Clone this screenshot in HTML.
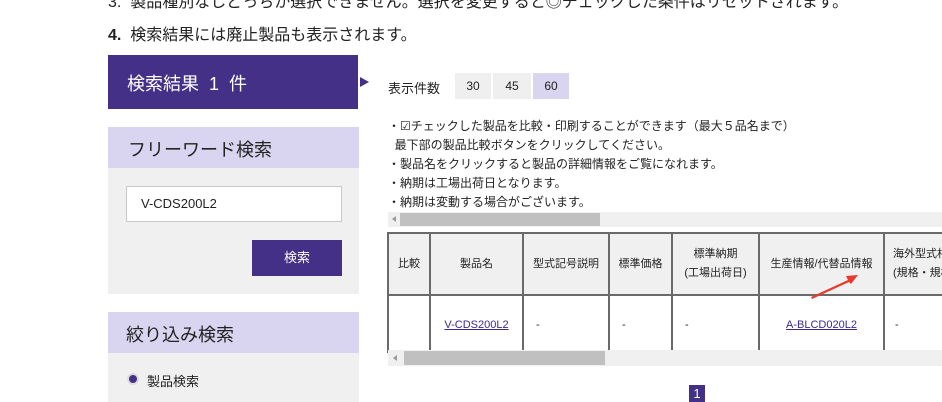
<!DOCTYPE html>
<html><head><meta charset="utf-8"><style>
*{margin:0;padding:0;box-sizing:border-box}
body{width:942px;height:402px;overflow:hidden;background:#fff;font-family:"Liberation Sans","Noto Sans CJK JP",sans-serif;color:#222;position:relative}
.a{position:absolute;white-space:nowrap}
.t{font-size:12px;color:#222}
table{border-collapse:collapse;position:absolute;left:387px;top:232px;font-size:11px;table-layout:fixed;width:620px}
td{border:2px solid #6a6a6a;text-align:center;vertical-align:middle;overflow:hidden;white-space:nowrap}
tr.h td{background:#f0f0f0;height:62px;line-height:19px}
tr.b td{height:58px;border-bottom:none}
a{color:#3a2a8a}
</style></head><body>
<div class="a" style="left:108px;top:-12px;font-size:16px">3.&nbsp;&nbsp;製品種別なしどっちか選択できません。選択を変更すると◎チェックした条件はリセットされます。</div>
<div class="a" style="left:108px;top:21px;font-size:16px"><b>4.</b>&nbsp;&nbsp;検索結果には廃止製品も表示されます。</div>

<div class="a" style="left:108px;top:55px;width:250px;height:54px;background:#453087;color:#fff;font-size:18px;padding:15px 0 0 19px">検索結果&nbsp;&nbsp;1&nbsp;&nbsp;件</div>
<div class="a" style="left:360px;top:77px;width:0;height:0;border-left:9px solid #453087;border-top:5px solid transparent;border-bottom:5px solid transparent"></div>

<div class="a" style="left:108px;top:127px;width:251px;height:41px;background:#d9d5f0;font-size:18px;padding:9px 0 0 20px">フリーワード検索</div>
<div class="a" style="left:108px;top:168px;width:251px;height:126px;background:#f0f0f0"></div>
<div class="a" style="left:126px;top:186px;width:216px;height:36px;background:#fff;border:1px solid #c8c8c8;font-size:13px;padding:9px 0 0 14px">V-CDS200L2</div>
<div class="a" style="left:252px;top:240px;width:90px;height:36px;background:#453087;color:#fff;font-size:13px;text-align:center;line-height:36px">検索</div>

<div class="a" style="left:108px;top:312px;width:251px;height:41px;background:#d9d5f0;font-size:18px;padding:9px 0 0 18px">絞り込み検索</div>
<div class="a" style="left:108px;top:353px;width:251px;height:49px;background:#f0f0f0"></div>
<div class="a" style="left:127px;top:373px;width:12px;height:12px;border-radius:50%;background:#453087;border:2px solid #ddd"></div>
<div class="a" style="left:147px;top:371px;font-size:13px">製品検索</div>

<div class="a t" style="left:388px;top:78px;font-size:13px">表示件数</div>
<div class="a t" style="left:455px;top:73px;width:36px;height:26px;background:#efefef;text-align:center;line-height:26px">30</div>
<div class="a t" style="left:493px;top:73px;width:38px;height:26px;background:#efefef;text-align:center;line-height:26px">45</div>
<div class="a t" style="left:533px;top:73px;width:36px;height:26px;background:#d9d5f0;text-align:center;line-height:26px">60</div>

<div class="a t" style="left:388px;top:117px;line-height:19px">・☑チェックした製品を比較・印刷することができます（最大５品名まで）<br>&nbsp;&nbsp;最下部の製品比較ボタンをクリックしてください。<br>・製品名をクリックすると製品の詳細情報をご覧になれます。<br>・納期は工場出荷日となります。<br>・納期は変動する場合がございます。</div>

<div class="a" style="left:388px;top:212px;width:554px;height:15px;background:#f0f0f0"></div>
<div class="a" style="left:392px;top:216px;width:0;height:0;border-right:4px solid #999;border-top:3px solid transparent;border-bottom:3px solid transparent"></div>
<div class="a" style="left:400px;top:213px;width:200px;height:13px;background:#c0c0c0"></div>

<table>
<colgroup><col style="width:42px"><col style="width:93px"><col style="width:86px"><col style="width:63px"><col style="width:87px"><col style="width:125px"><col style="width:124px"></colgroup>
<tr class="h"><td>比較</td><td>製品名</td><td>型式記号説明</td><td>標準価格</td><td>標準納期<br>(工場出荷日)</td><td>生産情報/代替品情報</td><td style="text-align:left;padding-left:8px">海外型式相当<br>(規格・規格)</td></tr>
<tr class="b"><td></td><td><a href="#">V-CDS200L2</a></td><td style="text-align:left;padding-left:12px">-</td><td style="text-align:left;padding-left:12px">-</td><td style="text-align:left;padding-left:12px">-</td><td><a href="#">A-BLCD020L2</a></td><td style="text-align:left;padding-left:10px">-</td></tr>
</table>
<svg class="a" style="left:808px;top:270px" width="52" height="30"><path d="M3 27 L40 10 L38 6 L50 5 L43 14 L41 12 L4 29Z" fill="#e8392b"/></svg>

<div class="a" style="left:388px;top:350px;width:554px;height:16px;background:#f0f0f0"></div>
<div class="a" style="left:393px;top:355px;width:0;height:0;border-right:4px solid #999;border-top:3px solid transparent;border-bottom:3px solid transparent"></div>
<div class="a" style="left:404px;top:351px;width:201px;height:14px;background:#c0c0c0"></div>

<div class="a" style="left:689px;top:385px;width:16px;height:17px;background:#453087;color:#fff;font-size:13px;text-align:center;line-height:17px">1</div>
</body></html>
